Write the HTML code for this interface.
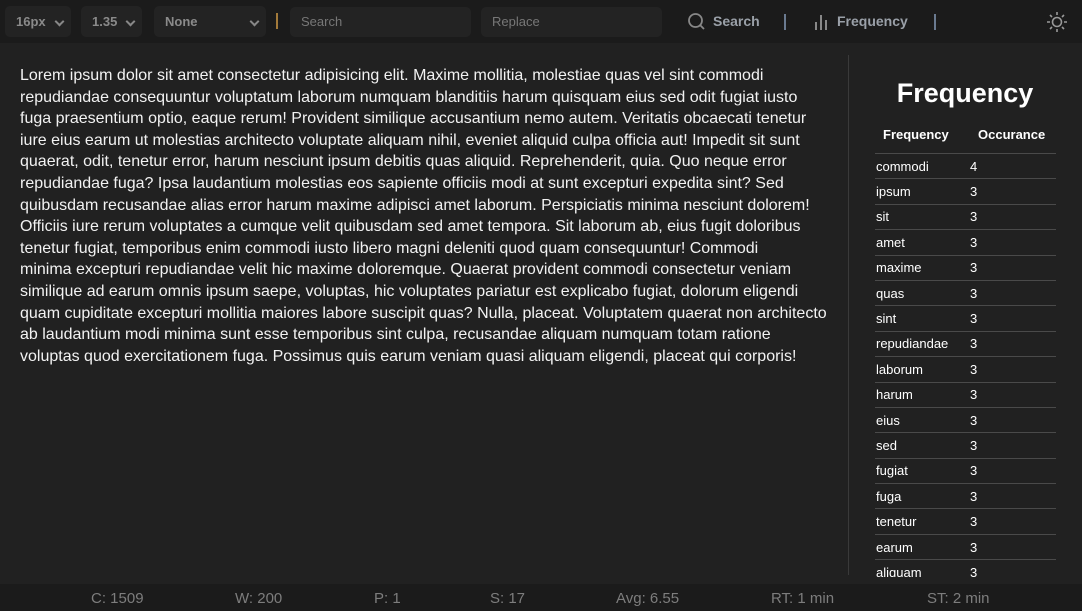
<!DOCTYPE html>
<html><head><meta charset="utf-8"><style>
*{box-sizing:border-box;margin:0;padding:0}
body{width:1082px;height:611px;background:#212121;font-family:"Liberation Sans",sans-serif;color:#fff;overflow:hidden;position:relative}
.top{position:absolute;left:0;top:0;width:1082px;height:43px;background:#1b1b1b}
.sel,.inp{position:absolute;top:6px;height:31px;background:#232323;border-radius:5px;color:#8a8a8a;font-size:13px;font-weight:bold;line-height:31px;padding-left:11px}
.inp{font-weight:normal;color:#777;top:7px;height:30px;line-height:30px}
.chev{position:absolute;right:8px;top:12px;width:7px;height:7px;border-right:2px solid #888;border-bottom:2px solid #888;transform:rotate(45deg)}
.bar{position:absolute;width:2px;height:16px;background:#a37a3a}
.btn{position:absolute;top:13px;font-size:14px;font-weight:bold;color:#9aa0a8}
.main{position:absolute;left:20px;top:65px;font-size:16px;line-height:21.6px;white-space:nowrap;color:#f2f2f2}
.div{position:absolute;left:848px;top:55px;width:1px;height:520px;background:#3a3a3a}
h1{position:absolute;left:848px;width:234px;text-align:center;top:78px;font-size:27px;font-weight:bold}
.th{position:absolute;top:127px;font-size:13px;font-weight:bold}
table{position:absolute;left:875px;top:153px;width:181px;border-collapse:collapse;font-size:13px}
td{height:25.4px;border-top:1px solid #4a4a4a;padding:0 0 0 1px;vertical-align:middle}
td+td{padding-left:0}
.clip{position:absolute;left:860px;top:150px;width:222px;height:427px;overflow:hidden}
.foot{position:absolute;left:0;top:584px;width:1082px;height:27px;background:#1b1b1b;color:#7d7d7d;font-size:15px}
.foot span{position:absolute;top:6px}
</style></head><body>
<div class="top">
 <div class="sel" style="left:5px;width:66px">16px<div class="chev"></div></div>
 <div class="sel" style="left:81px;width:61px">1.35<div class="chev"></div></div>
 <div class="sel" style="left:154px;width:112px">None<div class="chev"></div></div>
 <div class="bar" style="left:276px;top:13px"></div>
 <div class="inp" style="left:290px;width:181px">Search</div>
 <div class="inp" style="left:481px;width:181px">Replace</div>
 <svg style="position:absolute;left:687px;top:12px" width="20" height="20" viewBox="0 0 20 20"><circle cx="8.5" cy="8.5" r="6.5" fill="none" stroke="#888" stroke-width="1.8"/><line x1="13" y1="13" x2="17" y2="17" stroke="#888" stroke-width="1.8"/></svg>
 <div class="btn" style="left:713px">Search</div>
 <div class="bar" style="left:784px;top:14px;background:#6a7a90"></div>
 <svg style="position:absolute;left:814px;top:13px" width="16" height="18"><rect x="1" y="9" width="2" height="8" fill="#888"/><rect x="6" y="2" width="2" height="15" fill="#888"/><rect x="11" y="7" width="2" height="10" fill="#888"/></svg>
 <div class="btn" style="left:837px">Frequency</div>
 <div class="bar" style="left:934px;top:14px;background:#6a7a90"></div>
 <svg style="position:absolute;left:1046px;top:11px" width="22" height="22" viewBox="0 0 22 22" stroke="#999" stroke-width="1.6" fill="none"><circle cx="11" cy="11" r="4.5"/><path d="M11 1v3M11 18v3M1 11h3M18 11h3M4 4l2 2M16 16l2 2M4 18l2-2M16 6l2-2"/></svg>
</div>
<div class="main">Lorem ipsum dolor sit amet consectetur adipisicing elit. Maxime mollitia, molestiae quas vel sint commodi<br>repudiandae consequuntur voluptatum laborum numquam blanditiis harum quisquam eius sed odit fugiat iusto<br>fuga praesentium optio, eaque rerum! Provident similique accusantium nemo autem. Veritatis obcaecati tenetur<br>iure eius earum ut molestias architecto voluptate aliquam nihil, eveniet aliquid culpa officia aut! Impedit sit sunt<br>quaerat, odit, tenetur error, harum nesciunt ipsum debitis quas aliquid. Reprehenderit, quia. Quo neque error<br>repudiandae fuga? Ipsa laudantium molestias eos sapiente officiis modi at sunt excepturi expedita sint? Sed<br>quibusdam recusandae alias error harum maxime adipisci amet laborum. Perspiciatis minima nesciunt dolorem!<br>Officiis iure rerum voluptates a cumque velit quibusdam sed amet tempora. Sit laborum ab, eius fugit doloribus<br>tenetur fugiat, temporibus enim commodi iusto libero magni deleniti quod quam consequuntur! Commodi<br>minima excepturi repudiandae velit hic maxime doloremque. Quaerat provident commodi consectetur veniam<br>similique ad earum omnis ipsum saepe, voluptas, hic voluptates pariatur est explicabo fugiat, dolorum eligendi<br>quam cupiditate excepturi mollitia maiores labore suscipit quas? Nulla, placeat. Voluptatem quaerat non architecto<br>ab laudantium modi minima sunt esse temporibus sint culpa, recusandae aliquam numquam totam ratione<br>voluptas quod exercitationem fuga. Possimus quis earum veniam quasi aliquam eligendi, placeat qui corporis!</div>
<div class="div"></div>
<h1>Frequency</h1>
<div class="th" style="left:883px">Frequency</div>
<div class="th" style="left:978px">Occurance</div>
<div class="clip"><table style="left:15px;top:3px">
<tr><td style="width:95px">commodi</td><td>4</td></tr>
<tr><td>ipsum</td><td>3</td></tr>
<tr><td>sit</td><td>3</td></tr>
<tr><td>amet</td><td>3</td></tr>
<tr><td>maxime</td><td>3</td></tr>
<tr><td>quas</td><td>3</td></tr>
<tr><td>sint</td><td>3</td></tr>
<tr><td>repudiandae</td><td>3</td></tr>
<tr><td>laborum</td><td>3</td></tr>
<tr><td>harum</td><td>3</td></tr>
<tr><td>eius</td><td>3</td></tr>
<tr><td>sed</td><td>3</td></tr>
<tr><td>fugiat</td><td>3</td></tr>
<tr><td>fuga</td><td>3</td></tr>
<tr><td>tenetur</td><td>3</td></tr>
<tr><td>earum</td><td>3</td></tr>
<tr><td>aliquam</td><td>3</td></tr>
</table></div>
<div class="foot">
<span style="left:91px">C: 1509</span><span style="left:235px">W: 200</span><span style="left:374px">P: 1</span><span style="left:490px">S: 17</span><span style="left:616px">Avg: 6.55</span><span style="left:771px">RT: 1 min</span><span style="left:927px">ST: 2 min</span>
</div>
</body></html>
